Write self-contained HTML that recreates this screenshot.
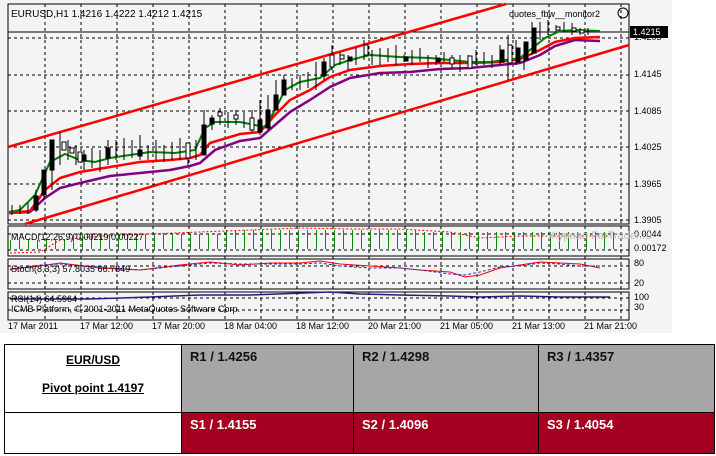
<!DOCTYPE html><html><head><style>
body{margin:0;width:716px;height:456px;background:#fff;position:relative;overflow:hidden;font-family:"Liberation Sans",sans-serif}
svg{position:absolute;left:0;top:0}
table{position:absolute;left:4px;top:344px;border-collapse:collapse;width:711px;height:110px}
td{border:1.5px solid #000;vertical-align:top;font-weight:bold;font-size:13px;padding:4px 8px}
.g{background:#a6a6a6;color:#111}.r{background:#a50021;color:#fff}
</style></head><body>
<svg width="716" height="340" font-family="Liberation Sans, sans-serif" font-size="9">
<defs><pattern id="h" x="10" y="0" width="9" height="10" patternUnits="userSpaceOnUse"><rect x="0" y="0" width="1" height="10" fill="#009000"/></pattern></defs>
<rect x="0" y="0" width="672" height="333" fill="#f4f4f4"/>
<g stroke="#000" stroke-width="1" stroke-dasharray="3,3" fill="none">
<path d="M45 4V320M81 4V320M117 4V320M153 4V320M189 4V320M225 4V320M261 4V320M297 4V320M333 4V320M369 4V320M405 4V320M441 4V320M477 4V320M513 4V320M549 4V320M585 4V320M621 4V320"/>
<path d="M8 38H629M8 75H629M8 111H629M8 147H629M8 184H629M8 220H629"/>
<path d="M8 250H629M8 234H629M8 283H629M8 266H629M8 310H629M8 298H629"/>
</g>
<rect x="8" y="4" width="621" height="220" fill="none" stroke="#000"/>
<rect x="8" y="226" width="621" height="30" fill="none" stroke="#000"/>
<rect x="8" y="259" width="621" height="30" fill="none" stroke="#000"/>
<rect x="8" y="292" width="621" height="28" fill="none" stroke="#000"/>
<line x1="8" y1="32" x2="629" y2="32" stroke="#000"/>
<g stroke="#f00" stroke-width="2.5"><line x1="8" y1="147" x2="506" y2="4"/><line x1="25" y1="224" x2="629" y2="45"/></g>
<polyline fill="none" stroke="#800080" stroke-width="2.5" points="9,213 30,212 45,198 60,188 80,183 110,176 140,173 170,170 190,166 200,163 215,150 240,141 260,138 275,125 290,112 310,100 330,87 350,78 380,73 410,72 440,69 470,68 500,65 520,63 540,55 555,46 575,40 600,41"/>
<polyline fill="none" stroke="#f00" stroke-width="2.5" points="9,213 30,211 45,190 60,178 80,172 110,167 140,162 170,160 190,158 200,155 210,143 240,134 260,132 275,115 290,100 310,90 330,77 350,70 380,66 410,64 440,63 470,63 500,62 520,59 540,50 555,42 575,38 600,37"/>
<polyline fill="none" stroke="#008000" stroke-width="2" points="9,212 20,210 35,195 50,162 65,154 80,160 95,162 110,158 130,155 150,152 175,153 195,150 205,128 215,122 240,122 265,127 275,110 285,90 300,82 320,78 335,65 350,60 370,55 400,57 430,58 450,60 470,62 490,62 505,60 520,58 530,50 545,38 560,31 575,30 600,31"/>
<g stroke="#000" stroke-width="1">
<path d="M12 205V215M20 205V214M28 203V214M36 190V212M44 170V200M52 140V190M60 132V165M68 140V160M76 145V165M84 150V170M92 148V168M100 150V172M108 140V165M116 140V160M124 138V160M132 140V158M140 135V160M148 145V160M156 140V160M164 145V162M172 142V160M180 138V160M188 145V165M196 140V160M204 110V155M212 115V130M220 108V125M228 112V128M236 110V125M244 112V128M252 110V132M260 100V135M268 95V130M276 80V110M284 75V95M292 78V90M300 75V90M308 72V88M316 62V90M324 58V80M332 45V70M340 52V65M348 55V70M356 48V65M364 40V60M372 50V65M380 48V65M388 48V62M396 45V65M404 55V62M412 50V65M420 48V62M428 55V68M436 55V65M444 52V62M452 55V68M460 55V72M468 55V65M476 50V65M484 52V65M492 55V68M500 45V65M508 35V80M516 40V65M524 42V70M532 22V55M540 22V40M548 20V35M556 25V32M564 22V32M572 23V35M580 28V35M588 28V35"/>
<g fill="#000"><rect x="34" y="196" width="4" height="14"/><rect x="42" y="170" width="4" height="25"/><rect x="50" y="140" width="4" height="30"/><rect x="82" y="155" width="4" height="6"/><rect x="106" y="148" width="4" height="10"/><rect x="138" y="150" width="4" height="6"/><rect x="202" y="125" width="4" height="30"/><rect x="210" y="118" width="4" height="6"/><rect x="258" y="120" width="4" height="12"/><rect x="266" y="110" width="4" height="18"/><rect x="274" y="95" width="4" height="15"/><rect x="282" y="80" width="4" height="15"/><rect x="322" y="62" width="4" height="14"/><rect x="348" y="57" width="4" height="4"/><rect x="404" y="57" width="4" height="4"/><rect x="436" y="58" width="4" height="4"/><rect x="500" y="50" width="4" height="12"/><rect x="516" y="48" width="4" height="14"/><rect x="524" y="42" width="4" height="18"/><rect x="532" y="28" width="4" height="25"/></g>
<g fill="#fff"><rect x="62" y="142" width="4" height="8"/><rect x="70" y="148" width="4" height="5"/><rect x="78" y="152" width="4" height="10"/><rect x="186" y="143" width="4" height="15"/><rect x="218" y="112" width="4" height="4"/><rect x="234" y="115" width="4" height="4"/><rect x="250" y="118" width="4" height="12"/><rect x="330" y="55" width="4" height="12"/><rect x="340" y="55" width="4" height="4"/><rect x="364" y="45" width="4" height="10"/><rect x="450" y="58" width="4" height="6"/><rect x="468" y="56" width="4" height="12"/><rect x="508" y="45" width="4" height="18"/><rect x="556" y="27" width="4" height="3"/><rect x="572" y="28" width="4" height="3"/><rect x="580" y="30" width="4" height="3"/></g>
</g>
<rect x="10" y="240" width="60" height="9" fill="url(#h)"/>
<rect x="70" y="234" width="150" height="15" fill="url(#h)"/>
<rect x="220" y="230" width="200" height="19" fill="url(#h)"/>
<rect x="420" y="232" width="195" height="17" fill="url(#h)"/>
<polyline fill="none" stroke="#f00" stroke-dasharray="2,2" points="10,253 40,252 60,240 100,236 200,232 300,228 350,229 400,229 450,232 480,238 520,236 610,236"/>
<polyline fill="none" stroke="#f00" points="10,269 40,266 60,263 100,268 140,270 180,265 210,262 240,265 270,263 300,263 320,261 340,264 370,266 400,268 420,270 450,272 465,277 480,275 500,268 520,265 540,262 560,263 580,264 600,268"/>
<polyline fill="none" stroke="#3030c0" stroke-dasharray="3,2" points="10,270 40,265 60,264 100,267 140,270 180,266 210,263 240,264 270,264 300,264 320,263 340,266 370,268 400,268 420,270 450,274 465,275 480,272 500,267 520,266 540,263 560,264 580,266 600,266"/>
<polyline fill="none" stroke="#202080" stroke-width="1.5" points="10,299 90,299 150,297 200,295 250,295 330,292 360,294 400,295 450,296 480,297 520,296 560,297 610,297"/>
<g fill="#000">
<text x="11" y="17" font-size="10">EURUSD,H1  1.4216 1.4222 1.4212 1.4215</text>
<text x="509" y="17" font-size="9">quotes_fbw__monitor2</text>
<circle cx="623" cy="13" r="5" fill="none" stroke="#000"/>
<text x="634" y="40">1.4205</text>
<text x="634" y="77">1.4145</text>
<text x="634" y="114">1.4085</text>
<text x="634" y="150">1.4025</text>
<text x="634" y="187">1.3965</text>
<text x="634" y="223">1.3905</text>
<text x="634" y="237">0.0044</text>
<text x="634" y="251">0.00172</text>
<text x="634" y="266">80</text><text x="634" y="286">20</text>
<text x="634" y="300">100</text><text x="634" y="310">30</text>
<text x="11" y="240">MACD(12,26,9) 0.00219 0.00227</text>
<text x="11" y="272">Stoch(8,3,3) 57.8035 66.7849</text>
<text x="11" y="302">RSI(14) 64.5964</text>
<text x="11" y="312">ICMB Platform, © 2001-2011 MetaQuotes Software Corp.</text>
<text x="8" y="329">17 Mar 2011</text><text x="80" y="329">17 Mar 12:00</text><text x="152" y="329">17 Mar 20:00</text><text x="224" y="329">18 Mar 04:00</text><text x="296" y="329">18 Mar 12:00</text><text x="368" y="329">20 Mar 21:00</text><text x="440" y="329">21 Mar 05:00</text><text x="512" y="329">21 Mar 13:00</text><text x="584" y="329">21 Mar 21:00</text>
</g>
<text x="548" y="239" font-size="11" fill="#bbb">Журнал ForTrader.ru</text>
<rect x="630" y="26" width="38" height="12" fill="#000"/>
<text x="633" y="35" fill="#fff">1.4215</text>
</svg>
<table><tr style="height:68px">
<td style="width:160px;background:#fff;text-align:center;font-size:12px;padding-top:8px"><u>EUR/USD</u><br><br><u>Pivot point 1.4197</u></td>
<td class="g" style="width:155px">R1 / 1.4256</td><td class="g" style="width:168px">R2 / 1.4298</td><td class="g">R3 / 1.4357</td></tr>
<tr><td style="background:#fff"></td><td class="r">S1 / 1.4155</td><td class="r">S2 / 1.4096</td><td class="r">S3 / 1.4054</td></tr></table>
</body></html>
